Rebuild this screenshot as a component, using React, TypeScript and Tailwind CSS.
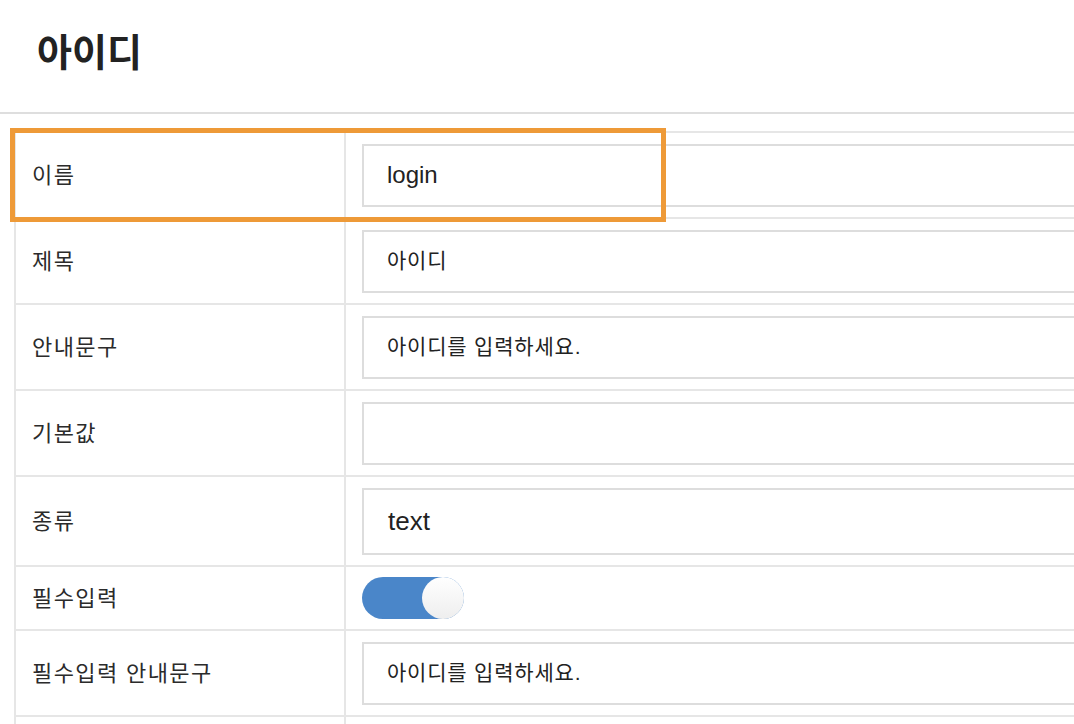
import React from "react";

const font = { fontFamily: '"Liberation Sans", "Noto Sans CJK KR", sans-serif' };

type Row = { label: string; kind: "input" | "select" | "toggle"; value?: string; h: string; latin?: boolean };

const rows: Row[] = [
  { label: "이름", kind: "input", value: "login", h: "h-[86px]", latin: true },
  { label: "제목", kind: "input", value: "아이디", h: "h-[86px]" },
  { label: "안내문구", kind: "input", value: "아이디를 입력하세요.", h: "h-[86px]" },
  { label: "기본값", kind: "input", value: "", h: "h-[86px]" },
  { label: "종류", kind: "select", value: "text", h: "h-[90px]" },
  { label: "필수입력", kind: "toggle", h: "h-[64px]" },
  { label: "필수입력 안내문구", kind: "input", value: "아이디를 입력하세요.", h: "h-[86px]" },
  { label: "", kind: "input", value: "", h: "h-[86px]" },
];

export default function App() {
  return (
    <div className="relative w-[1074px] h-[724px] overflow-hidden bg-white" style={font}>
      <div className="h-[114px] border-b-2 border-[#dedede] flex items-center pl-[37px]">
        <h1 className="text-[38px] font-bold text-[#222] leading-none -mt-[6px]">아이디</h1>
      </div>
      <div className="mt-[17px] ml-[14px] w-[1200px] border-l-2 border-t-2 border-[#e6e6e6]">
        {rows.map((r, i) => (
          <div key={i} className={`flex ${r.h} border-b-2 border-[#e6e6e6]`}>
            <div className="w-[330px] shrink-0 border-r-2 border-[#e6e6e6] flex items-center pl-[16px] text-[22px] tracking-[1.4px] text-[#2b2b2b]">
              {r.label}
            </div>
            <div className="flex-1 flex items-center pl-[16px]">
              {r.kind === "toggle" ? (
                <div className="relative w-[102px] h-[42px] rounded-full bg-[#4a86c9]">
                  <div className="absolute right-0 top-0 w-[42px] h-[42px] rounded-full bg-gradient-to-b from-white to-[#eeeeee]"></div>
                </div>
              ) : (
                <div
                  className={`w-[800px] ${
                    r.kind === "select"
                      ? "h-[67px] text-[26px] pl-[24px]"
                      : r.latin
                      ? "h-[63px] text-[24px] pl-[23px]"
                      : "h-[63px] text-[21px] tracking-[0.8px] pl-[23px]"
                  } border-2 border-[#dddddd] flex items-center text-[#222]`}
                >
                  {r.value}
                </div>
              )}
            </div>
          </div>
        ))}
      </div>
      <div className="absolute left-[10px] top-[128px] w-[656px] h-[94px] border-[5px] border-[#ee9a38] pointer-events-none"></div>
    </div>
  );
}
